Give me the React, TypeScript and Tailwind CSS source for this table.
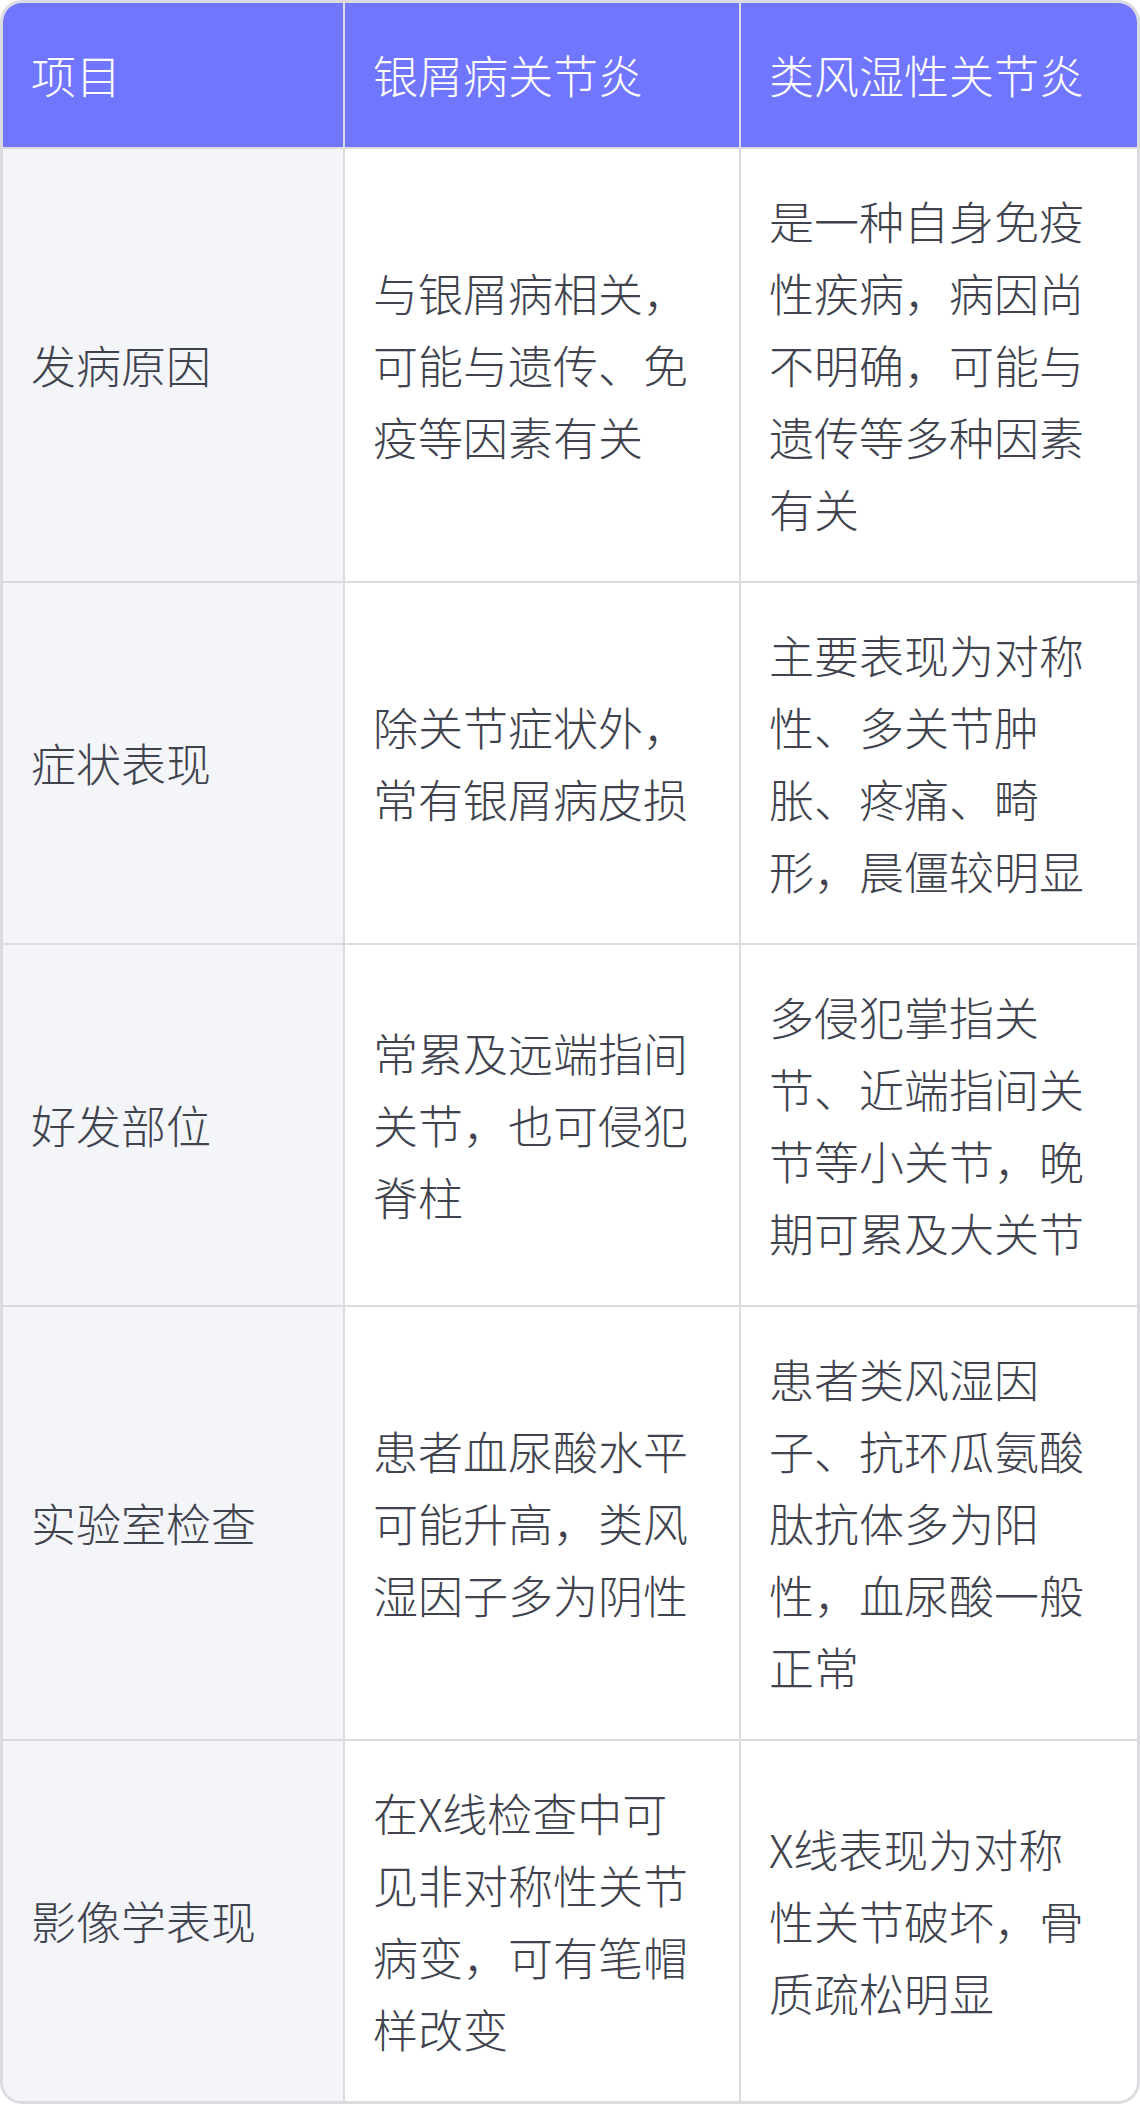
import React from "react"

type Row = { item: string; psa: string; ra: string }

const rows: Row[] = [
  {
    item: "发病原因",
    psa: "与银屑病相关，可能与遗传、免疫等因素有关",
    ra: "是一种自身免疫性疾病，病因尚不明确，可能与遗传等多种因素有关",
  },
  {
    item: "症状表现",
    psa: "除关节症状外，常有银屑病皮损",
    ra: "主要表现为对称性、多关节肿胀、疼痛、畸形，晨僵较明显",
  },
  {
    item: "好发部位",
    psa: "常累及远端指间关节，也可侵犯脊柱",
    ra: "多侵犯掌指关节、近端指间关节等小关节，晚期可累及大关节",
  },
  {
    item: "实验室检查",
    psa: "患者血尿酸水平可能升高，类风湿因子多为阴性",
    ra: "患者类风湿因子、抗环瓜氨酸肽抗体多为阳性，血尿酸一般正常",
  },
  {
    item: "影像学表现",
    psa: "在X线检查中可见非对称性关节病变，可有笔帽样改变",
    ra: "X线表现为对称性关节破坏，骨质疏松明显",
  },
]

export default function App() {
  return (
    <div
      className="w-[1140px] bg-white"
      style={{ fontFamily: '"Noto Sans CJK SC", "Noto Sans", sans-serif' }}
    >
      <div className="overflow-hidden rounded-[22px] border-[3px] border-[#dcdce0]">
        <table className="w-full table-fixed border-collapse text-[45px] font-light leading-[72px] text-[#40434e]">
          <colgroup>
            <col className="w-[341px]" />
            <col className="w-[396px]" />
            <col />
          </colgroup>
          <thead>
            <tr className="bg-[#7176ff] text-white">
              <th className="border-r-2 border-[#dcdce0] pl-7 pr-6 py-9 text-left font-light">项目</th>
              <th className="border-r-2 border-[#dcdce0] pl-7 pr-6 py-9 text-left font-light">银屑病关节炎</th>
              <th className="pl-7 pr-6 py-9 text-left font-light">类风湿性关节炎</th>
            </tr>
          </thead>
          <tbody>
            {rows.map((r) => (
              <tr key={r.item} className="border-t-2 border-[#dcdce0]">
                <td className="border-r-2 border-[#dcdce0] bg-[#f4f5f9] pl-7 pr-6 py-9 align-middle">{r.item}</td>
                <td className="border-r-2 border-[#dcdce0] pl-7 pr-8 py-9 align-middle">{r.psa}</td>
                <td className="pl-7 pr-8 py-9 align-middle">{r.ra}</td>
              </tr>
            ))}
          </tbody>
        </table>
      </div>
    </div>
  )
}
